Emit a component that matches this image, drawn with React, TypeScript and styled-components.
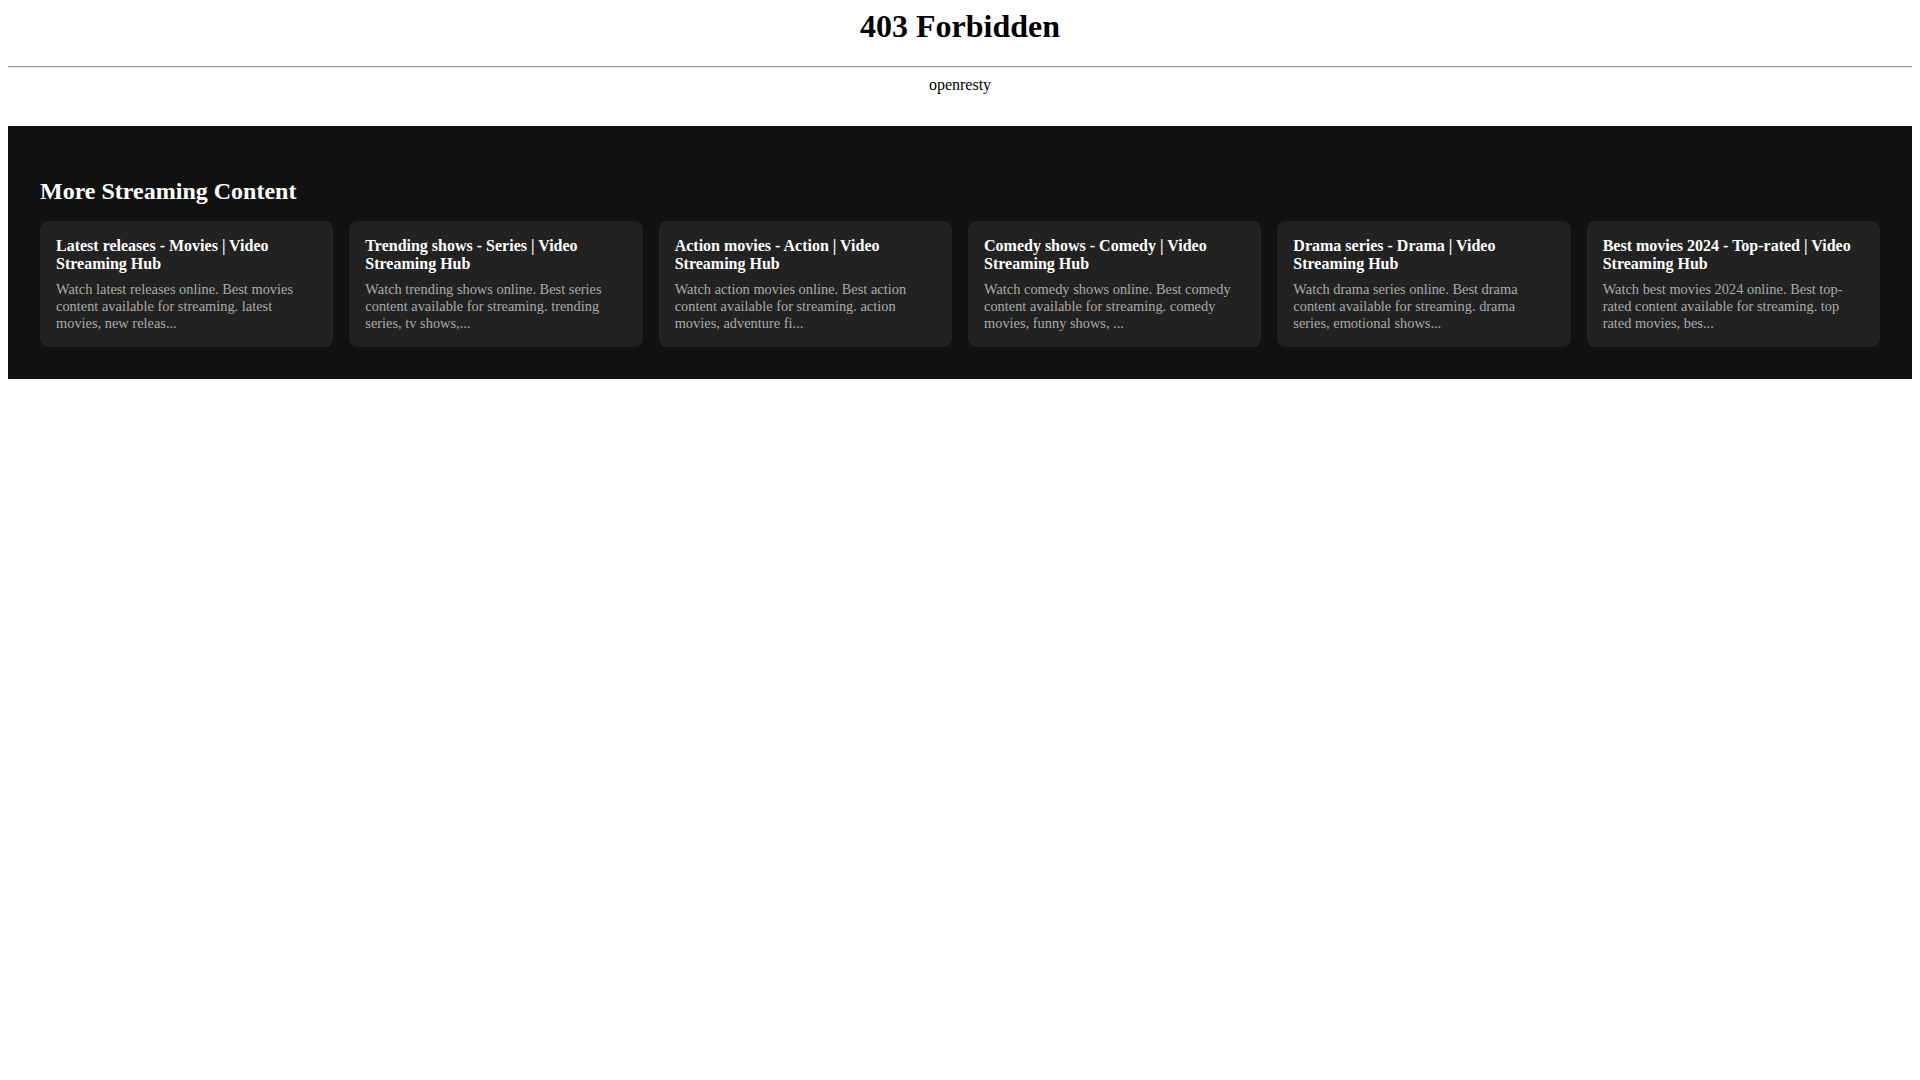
import { createGlobalStyle } from 'styled-components'
import styled from 'styled-components'

const GlobalStyle = createGlobalStyle`
  body {
    margin: 8px;
    font-family: "Liberation Serif", "Times New Roman", serif;
    font-size: 16px;
    color: #000;
    background: #fff;
  }
`

const Center = styled('div')`
  text-align: center;
`

const ErrorTitle = styled('h1')`
  font-size: 32px;
  font-weight: bold;
  margin: 0 0 21.44px;
`

const Rule = styled('hr')`
  margin: 8px 0;
  border: none;
  border-top: 1px solid #9a9a9a;
  border-bottom: 1px solid #eee;
`

const Related = styled('section')`
  margin-top: 32px;
  padding: 32px;
  background: #111;
  color: #fff;
`

const RelatedHeading = styled('h2')`
  font-size: 24px;
  font-weight: bold;
  margin: 19.92px 0 16px;
`

const CardGrid = styled('div')`
  display: grid;
  grid-template-columns: repeat(6, 1fr);
  gap: 16px;
`

const Card = styled('a')`
  display: block;
  padding: 16px;
  background: #222;
  border-radius: 8px;
  color: inherit;
  text-decoration: none;
`

const CardTitle = styled('h3')`
  font-size: 16px;
  font-weight: bold;
  margin: 0 0 7.5px;
  color: #fff;
`

const CardText = styled('p')`
  font-size: 0.9em;
  line-height: 1.17;
  margin: 0;
  color: #aaa;
`

interface Item {
  title: string
  text: string
}

const items: Item[] = [
  {
    title: 'Latest releases - Movies | Video Streaming Hub',
    text: 'Watch latest releases online. Best movies content available for streaming. latest movies, new releas...'
  },
  {
    title: 'Trending shows - Series | Video Streaming Hub',
    text: 'Watch trending shows online. Best series content available for streaming. trending series, tv shows,...'
  },
  {
    title: 'Action movies - Action | Video Streaming Hub',
    text: 'Watch action movies online. Best action content available for streaming. action movies, adventure fi...'
  },
  {
    title: 'Comedy shows - Comedy | Video Streaming Hub',
    text: 'Watch comedy shows online. Best comedy content available for streaming. comedy movies, funny shows, ...'
  },
  {
    title: 'Drama series - Drama | Video Streaming Hub',
    text: 'Watch drama series online. Best drama content available for streaming. drama series, emotional shows...'
  },
  {
    title: 'Best movies 2024 - Top-rated | Video Streaming Hub',
    text: 'Watch best movies 2024 online. Best top-rated content available for streaming. top rated movies, bes...'
  }
]

const App = (): JSX.Element => {
  return (
    <>
      <GlobalStyle />
      <Center><ErrorTitle>403 Forbidden</ErrorTitle></Center>
      <Rule />
      <Center>openresty</Center>
      <Related>
        <RelatedHeading>More Streaming Content</RelatedHeading>
        <CardGrid>
          {items.map((item) => (
            <Card key={item.title} href='#'>
              <CardTitle>{item.title}</CardTitle>
              <CardText>{item.text}</CardText>
            </Card>
          ))}
        </CardGrid>
      </Related>
    </>
  )
}

export default App
